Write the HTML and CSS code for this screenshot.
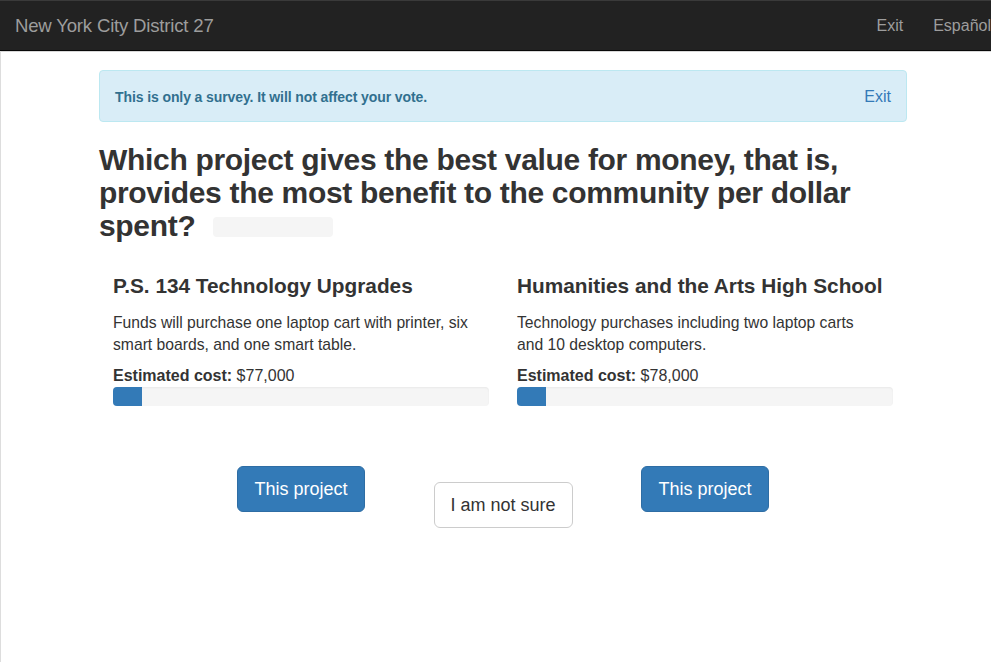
FILE: index.html
```html
<!DOCTYPE html>
<html lang="en">
<head>
<meta charset="utf-8">
<title>New York City District 27</title>
<link rel="stylesheet" href="styles.css">
</head>
<body>
<nav class="navbar">
  <a class="brand" href="#">New York City District 27</a>
  <ul class="nav-right">
    <li><a href="#">Exit</a></li>
    <li><a href="#">Español</a></li>
  </ul>
</nav>
<main class="page">
  <div class="container">
    <div class="alert">
      <span class="alert-text">This is only a survey. It will not affect your vote.</span>
      <a class="alert-link" href="#">Exit</a>
    </div>
    <h1 class="question">Which project gives the best value for money, that is, provides the most benefit to the community per dollar spent? <span class="placeholder"></span></h1>
    <div class="projects">
      <section class="project">
        <h3 class="project-title">P.S. 134 Technology Upgrades</h3>
        <p class="project-desc">Funds will purchase one laptop cart with printer, six smart boards, and one smart table.</p>
        <p class="cost"><strong>Estimated cost:</strong> $77,000</p>
        <div class="progress"><div class="progress-bar" style="width: 7.7%"></div></div>
      </section>
      <section class="project">
        <h3 class="project-title">Humanities and the Arts High School</h3>
        <p class="project-desc">Technology purchases including two laptop carts and 10 desktop computers.</p>
        <p class="cost"><strong>Estimated cost:</strong> $78,000</p>
        <div class="progress"><div class="progress-bar" style="width: 7.8%"></div></div>
      </section>
    </div>
    <div class="choices">
      <button class="btn btn-primary btn-left" type="button">This project</button>
      <button class="btn btn-default btn-middle" type="button">I am not sure</button>
      <button class="btn btn-primary btn-right" type="button">This project</button>
    </div>
  </div>
</main>
</body>
</html>
```

FILE: styles.css
```css
html, body {
  margin: 0;
  padding: 0;
  overflow: hidden;
  background: #fff;
}

body {
  font-family: "Liberation Sans", Arial, Helvetica, sans-serif;
  font-size: 14px;
  line-height: 1.42857;
  color: #333;
  width: 991px;
  height: 662px;
}

a { text-decoration: none; }

.navbar {
  height: 51px;
  padding-top: 2px;
  background: #222;
  border-top: 1px solid #3a3a3a;
  border-bottom: 1px solid #080808;
  box-sizing: border-box;
  display: flex;
  align-items: center;
  justify-content: space-between;
  white-space: nowrap;
  box-shadow: 0 1px 0 #d8d8d8;
}

.brand {
  color: #9d9d9d;
  font-size: 18.6px;
  padding-left: 15px;
  letter-spacing: -0.2px;
}

.nav-right {
  list-style: none;
  margin: 0;
  padding: 0;
  display: flex;
  gap: 30px;
}

.nav-right a {
  color: #9d9d9d;
  font-size: 16px;
}

.page {
  border-left: 1px solid #ddd;
  height: 611px;
  padding-top: 19px;
  box-sizing: border-box;
}

.container {
  width: 808px;
  margin-left: 98px;
}

.alert {
  background: #d9edf7;
  border: 1px solid #bce8f1;
  border-radius: 4px;
  color: #31708f;
  height: 52px;
  box-sizing: border-box;
  display: flex;
  align-items: center;
  justify-content: space-between;
  padding: 0 15px;
}

.alert-text {
  font-weight: bold;
  font-size: 14px;
  letter-spacing: -0.1px;
  margin-top: 3px;
}

.alert-link {
  color: #337ab7;
  font-size: 16px;
  margin-top: 3px;
}

.question {
  font-size: 30px;
  font-weight: bold;
  line-height: 33px;
  margin: 21px 0 0;
  letter-spacing: -0.32px;
  color: #333;
}

.placeholder {
  display: inline-block;
  width: 120px;
  height: 20px;
  background: #f5f5f5;
  border-radius: 4px;
  margin-left: 10px;
  vertical-align: -1px;
}

.projects {
  display: grid;
  grid-template-columns: 1fr 1fr;
  margin-top: 30px;
}

.project {
  padding: 0 14px;
}

.project-title {
  font-size: 20.8px;
  font-weight: bold;
  margin: 0 0 12px;
  line-height: 28px;
}

.project-desc {
  font-size: 15.7px;
  line-height: 22px;
  margin: 0 0 9px;
  padding-right: 10px;
}

.cost {
  font-size: 16px;
  line-height: 22px;
  margin: 0;
}

.progress {
  height: 19px;
  background: #f5f5f5;
  border-radius: 4px;
  overflow: hidden;
  box-shadow: inset 0 1px 2px rgba(0, 0, 0, 0.05);
}

.progress-bar {
  height: 100%;
  background: #337ab7;
}

.choices {
  display: grid;
  grid-template-columns: 1fr 1fr;
  margin-top: 60px;
}

.btn {
  font-family: "Liberation Sans", Arial, Helvetica, sans-serif;
  font-size: 18px;
  height: 46px;
  padding: 0;
  border-radius: 6px;
  border: 1px solid transparent;
  cursor: pointer;
  grid-row: 1;
  white-space: nowrap;
}

.btn-primary {
  background: #337ab7;
  border-color: #2e6da4;
  color: #fff;
  width: 128px;
}

.btn-default {
  background: #fff;
  border-color: #ccc;
  color: #333;
  width: 139px;
}

.btn-left {
  grid-column: 1;
  justify-self: center;
}

.btn-right {
  grid-column: 2;
  justify-self: center;
}

.btn-middle {
  grid-column: 1 / span 2;
  justify-self: center;
  margin-top: 16px;
}
```
